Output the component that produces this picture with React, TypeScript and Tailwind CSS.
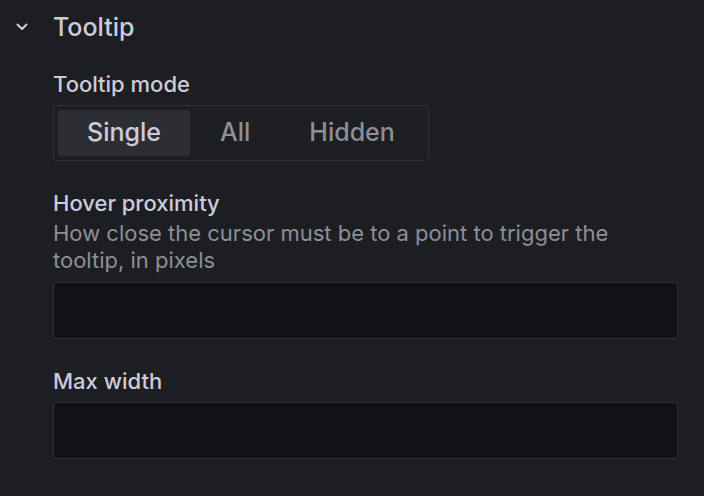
import React from 'react';

const modes = ['Single', 'All', 'Hidden'];

const Chevron: React.FC = () => (
  <svg width="12" height="8" viewBox="0 0 12 8" fill="none" className="text-[#ccccdc]">
    <path d="M1.5 1.5 L6 6 L10.5 1.5" stroke="currentColor" strokeWidth="2" strokeLinecap="round" strokeLinejoin="round" />
  </svg>
);

const Label: React.FC<{ children: React.ReactNode; className?: string }> = ({ children, className = '' }) => (
  <div className={`text-[22px] leading-[28px] font-medium text-[#ccccdc] ${className}`}>{children}</div>
);

const TextInput: React.FC<{ className?: string }> = ({ className = '' }) => (
  <input
    type="text"
    className={`block w-full h-[57px] rounded-[3px] border border-[#2f3036] bg-[#111217] outline-none ${className}`}
  />
);

export default function App() {
  const active = 'Single';

  return (
    <div className="w-[704px] h-[496px] bg-[#1d1e22] overflow-hidden" style={{ fontFamily: 'Inter, "Noto Sans", sans-serif' }}>
      {/* Section header */}
      <div className="flex items-center h-[30px] mt-[12px]">
        <div className="w-[53px] pl-[16px] flex items-center">
          <Chevron />
        </div>
        <h2 className="text-[25px] leading-[30px] font-medium text-[#ccccdc]">Tooltip</h2>
      </div>

      <div className="pl-[53px] pr-[26px]">
        {/* Tooltip mode */}
        <Label className="mt-[28px]">Tooltip mode</Label>
        <div className="mt-[7px] inline-flex gap-[1px] p-[4px] rounded-[3px] border border-[#2f3036]">
          {modes.map((m) => (
            <button
              key={m}
              className={`h-[46px] px-[29px] rounded-[3px] text-[25px] font-medium ${
                m === active ? 'bg-[#2d2e34] text-[#ccccdc]' : 'text-[#8e8e99]'
              }`}
            >
              {m}
            </button>
          ))}
        </div>

        {/* Hover proximity */}
        <Label className="mt-[28px]">Hover proximity</Label>
        <p className="mt-[3px] text-[22px] leading-[27px] text-[#8e8e99] pr-[40px]">
          How close the cursor must be to a point to trigger the tooltip, in pixels
        </p>
        <TextInput className="mt-[8px]" />

        {/* Max width */}
        <Label className="mt-[28px]">Max width</Label>
        <TextInput className="mt-[7px]" />
      </div>
    </div>
  );
}
